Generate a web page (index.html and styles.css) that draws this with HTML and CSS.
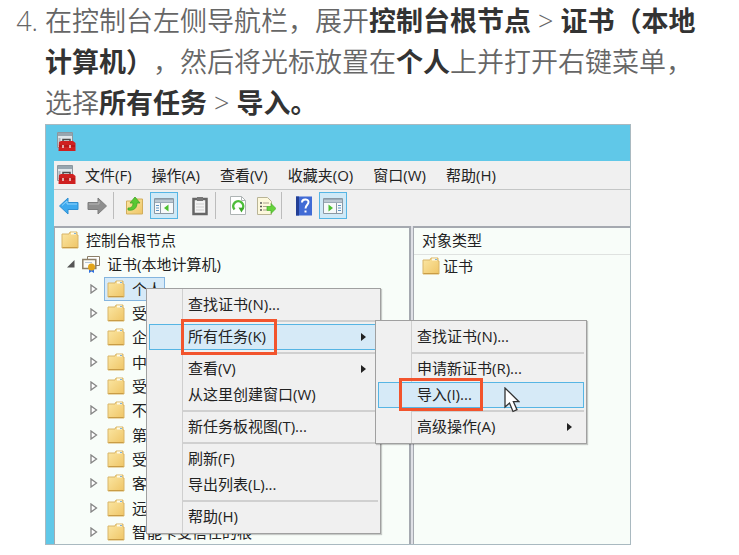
FILE: index.html
```html
<!DOCTYPE html>
<html lang="zh-CN">
<head>
    <meta charset="UTF-8">
    <meta name="viewport" content="width=device-width, initial-scale=1.0">
    <title>导入证书</title>
    <link rel="stylesheet" href="styles.css">
</head>
<body>
<!-- shared icons -->
<svg class="defs" aria-hidden="true">
    <defs>
        <linearGradient id="gold" x1="0" y1="0" x2="1" y2="1">
            <stop offset="0" stop-color="#fbe7a4"/>
            <stop offset="1" stop-color="#efc566"/>
        </linearGradient>
        <symbol id="folder" viewBox="0 0 18 18">
            <path d="M1 3h7l1-2h7v3h1v13H1z" fill="url(#gold)" stroke="#d9b568"/>
            <path d="M10 2.5h5" stroke="#fffbe8" stroke-width="2"/>
            <path d="M13 2.5h2" stroke="#7fb3d8" stroke-width="1"/>
            <path d="M1.5 16.5h15" stroke="#c99c45"/>
        </symbol>
        <symbol id="toolbox" viewBox="0 0 20 20">
            <path d="M1.500 .5h15v15h-15z" fill="#dfe6ea" stroke="#8b979f"/>
            <path d="M2 1h14v3H2z" fill="#97a6b0"/>
            <path d="M3.500 6v8" stroke="#aab5bc" stroke-width="2"/>
            <path d="M7 10V7.500h7V10" fill="none" stroke="#4b4b4b" stroke-width="1.500"/>
            <path d="M3 10l2-1h12l2.500 2v8H2.500z" fill="#cf2020"/>
            <path d="M3 14h16" stroke="#a01010"/>
            <path d="M7 13v3M14 13v3" stroke="#f0d8d8" stroke-width="1.500"/>
        </symbol>
        <symbol id="expander" viewBox="0 0 8 10">
            <path d="M1 1l5.500 4L1 9z" fill="#fff" stroke="#858585" stroke-width="1.300"/>
        </symbol>
    </defs>
</svg>

<ol class="steps" start="4">
    <li>
        <p>在控制台左侧导航栏，展开<b>控制台根节点</b> &gt; <b>证书（本地计算机）</b>，然后将光标放置在<b>个人</b>上并打开右键菜单，选择<b>所有任务</b> &gt; <b>导入。</b></p>

        <div class="window">
            <div class="titlebar"><svg class="app-icon"><use href="#toolbox"/></svg></div>
            <div class="frame">
                <div class="menubar">
                    <svg class="app-icon"><use href="#toolbox"/></svg>
                    <button>文件(F)</button>
                    <button>操作(A)</button>
                    <button>查看(V)</button>
                    <button>收藏夹(O)</button>
                    <button>窗口(W)</button>
                    <button>帮助(H)</button>
                </div>
                <div class="toolbar">
                    <button aria-label="后退"><svg viewBox="0 0 20 20"><path d="M.5 10L9 2v4.500h10v7H9V18z" fill="#3da9ee" stroke="#2f8fd2"/><path d="M3 9.500L8 5v3h10" fill="none" stroke="#8fd3fb"/></svg></button>
                    <button aria-label="前进"><svg viewBox="0 0 20 20"><path d="M19.500 10L11 2v4.500H1v7h10V18z" fill="#8e8e8e" stroke="#7d7d7d"/><path d="M2 8h10V5" fill="none" stroke="#b5b5b5"/></svg></button>
                    <span class="divider"></span>
                    <button aria-label="上一级"><svg viewBox="0 0 20 20"><path d="M1.500 5h7l1-2h8v15h-16z" fill="url(#gold)" stroke="#d2ae5c"/><path d="M3 12c4 0 5-2 5-5H5l5-6 5 6h-3c0 5-3 8-9 7z" fill="#58c832" stroke="#3fa524" stroke-width=".8"/></svg></button>
                    <button class="on" aria-label="显示控制台树"><svg viewBox="0 0 20 20"><path d="M.5 2.500h19v15H.5z" fill="#f7f9fa" stroke="#8b98a3"/><path d="M1 3h18v4H1z" fill="#9cabb8"/><path d="M1 5h18" stroke="#dbe3ea"/><path d="M6.500 7v10" stroke="#8b98a3"/><path d="M2 9.500h3M2 12h3M2 14.500h3" stroke="#5d94c4"/><path d="M14.500 8.500v7L10 12z" fill="#4cc02f"/></svg></button>
                    <button aria-label="粘贴"><svg viewBox="0 0 20 20"><path d="M3.500 3h13v15h-13z" fill="#f4f4f4" stroke="#666" stroke-width="2.500"/><path d="M7 1h6v4H7z" fill="#777"/><path d="M6 8h8M6 11h8M6 14h8" stroke="#cfcfcf"/></svg></button>
                    <span class="divider"></span>
                    <button aria-label="刷新"><svg viewBox="0 0 20 20"><path d="M2.500 .5h11l4 4v14h-15z" fill="#fff" stroke="#aeb4b4"/><path d="M13.500 .5v4h4" fill="none" stroke="#aeb4b4"/><path d="M6.500 13.500a5 5 0 1 1 7.500 0" fill="none" stroke="#4dbd3a" stroke-width="2.500"/><path d="M10.500 11.500l5.500 .5-2.500 4.500z" fill="#3ba829"/></svg></button>
                    <button aria-label="导出列表"><svg viewBox="0 0 20 20"><path d="M1.500 1.500h10l4 4v13h-14z" fill="#fdf8dc" stroke="#b9b496"/><path d="M4 7h2M4 10.500h2M4 14h2" stroke="#555" stroke-width="1.500"/><path d="M7 7h6M7 10.500h4M7 14h4" stroke="#aaa28c"/><path d="M11 10.500h4v-3l5 5-5 5v-3h-4z" fill="#65d33b" stroke="#46ae25" stroke-width=".7"/></svg></button>
                    <span class="divider"></span>
                    <button aria-label="帮助"><svg viewBox="0 0 20 20"><path d="M2 .5h16v19H2z" fill="#416bd5"/><path d="M2 .5h3v19H2z" fill="#233f95"/><path d="M8 6.500c0-4 6.500-4 6.500-.5 0 3-3 3-3 6.500" fill="none" stroke="#fff" stroke-width="2"/><path d="M10.500 14.500h2v2h-2z" fill="#fff"/></svg></button>
                    <button class="on" aria-label="显示操作窗格"><svg viewBox="0 0 20 20"><path d="M.5 2.500h19v15H.5z" fill="#f7f9fa" stroke="#8b98a3"/><path d="M1 3h18v4H1z" fill="#9cabb8"/><path d="M1 5h18" stroke="#dbe3ea"/><path d="M13.500 7v10" stroke="#8b98a3"/><path d="M15 9.500h3M15 12h3M15 14.500h3" stroke="#5d94c4"/><path d="M5.500 8.500v7L10 12z" fill="#4cc02f"/></svg></button>
                </div>
                <div class="panes">
                    <ul class="tree">
                        <li class="root"><svg class="folder"><use href="#folder"/></svg>控制台根节点</li>
                        <li class="store">
                            <svg class="expander" viewBox="0 0 8 10"><path d="M7.500 1v7.500H0z" fill="#555"/></svg>
                            <svg class="folder" viewBox="0 0 18 18"><path d="M5.500 1.500h12v9h-12z" fill="#fff" stroke="#8c7f68"/><path d="M.8 4.500h13v9H.8z" fill="#fbfbf6" stroke="#8c7f68" stroke-width="1.500"/><path d="M3 7.500h7" stroke="#b6c6d8"/><path d="M7 13v5l2.500-1.500L12 18v-5z" fill="#2f6fe0"/><circle cx="9.500" cy="12" r="3.500" fill="#e2a51b"/></svg>
                            证书(本地计算机)
                        </li>
                        <li><svg class="expander"><use href="#expander"/></svg><span class="node selected"><svg class="folder"><use href="#folder"/></svg>个人</span></li>
                        <li><svg class="expander"><use href="#expander"/></svg><span class="node"><svg class="folder"><use href="#folder"/></svg>受</span></li>
                        <li><svg class="expander"><use href="#expander"/></svg><span class="node"><svg class="folder"><use href="#folder"/></svg>企</span></li>
                        <li><svg class="expander"><use href="#expander"/></svg><span class="node"><svg class="folder"><use href="#folder"/></svg>中</span></li>
                        <li><svg class="expander"><use href="#expander"/></svg><span class="node"><svg class="folder"><use href="#folder"/></svg>受</span></li>
                        <li><svg class="expander"><use href="#expander"/></svg><span class="node"><svg class="folder"><use href="#folder"/></svg>不</span></li>
                        <li><svg class="expander"><use href="#expander"/></svg><span class="node"><svg class="folder"><use href="#folder"/></svg>第</span></li>
                        <li><svg class="expander"><use href="#expander"/></svg><span class="node"><svg class="folder"><use href="#folder"/></svg>受</span></li>
                        <li><svg class="expander"><use href="#expander"/></svg><span class="node"><svg class="folder"><use href="#folder"/></svg>客</span></li>
                        <li><svg class="expander"><use href="#expander"/></svg><span class="node"><svg class="folder"><use href="#folder"/></svg>远</span></li>
                        <li><svg class="expander"><use href="#expander"/></svg><span class="node"><svg class="folder"><use href="#folder"/></svg>智能卡受信任的根</span></li>
                    </ul>
                    <div class="list">
                        <div class="list-head">对象类型</div>
                        <div class="list-row"><svg class="folder"><use href="#folder"/></svg>证书</div>
                    </div>
                </div>
            </div>

            <div class="menu context">
                <button>查找证书(N)...</button>
                <hr>
                <div class="parent">
                    <button class="active more"><span class="callout">所有任务(K)</span></button>
                    <div class="menu submenu">
                        <button>查找证书(N)...</button>
                        <hr>
                        <button>申请新证书(R)...</button>
                        <button class="active"><span class="callout">导入(I)...</span>
                            <svg class="cursor" viewBox="0 0 16 26"><path d="M1 1v19l4.500-4 3.500 8.500 4-1.800-3.600-8H15z" fill="#fff" stroke="#333" stroke-width="1.300"/></svg>
                        </button>
                        <hr>
                        <button class="more">高级操作(A)</button>
                    </div>
                </div>
                <hr>
                <button class="more">查看(V)</button>
                <button>从这里创建窗口(W)</button>
                <hr>
                <button>新任务板视图(T)...</button>
                <hr>
                <button>刷新(F)</button>
                <button>导出列表(L)...</button>
                <hr>
                <button>帮助(H)</button>
            </div>
        </div>
    </li>
</ol>
</body>
</html>
```
FILE: styles.css
```css
* {
    box-sizing: border-box;
}
body {
    margin: 0;
    background: #fff;
    color: #666;
    font-family: "Open Sans", "Noto Sans CJK SC", sans-serif;
}
.defs {
    position: absolute;
    width: 0;
    height: 0;
}
.steps {
    margin: 0;
    padding: 0 24px 10px 45px;
    font-size: 27px;
    font-weight: 350;
    line-height: 41px;
    text-spacing-trim: space-all;
}
.steps p {
    margin: 0;
}
.steps b {
    color: #333;
    font-weight: 700;
}

/* console window */
.window {
    position: relative;
    max-width: 586px;
    margin-top: 1px;
    padding-left: 8px;
    border: 1px solid #a9b9c0;
    background: #60c8e8;
    color: #222;
    font-size: 15px;
    font-weight: 400;
    line-height: 20px;
}
.window button {
    padding: 0;
    border: 0;
    background: none;
    color: inherit;
    font: inherit;
    white-space: nowrap;
}
.window svg {
    display: block;
    flex: none;
}
.titlebar {
    height: 36px;
    padding: 7px 0 0 2px;
}
.app-icon {
    width: 20px;
    height: 20px;
}
.frame {
    background: #f0f0f0;
}
.menubar {
    display: flex;
    align-items: center;
    gap: 20px;
    height: 29px;
    padding-left: 2px;
    border-bottom: 1px solid #c4c6c6;
}
.menubar .app-icon {
    margin-right: -11px;
}
.toolbar {
    display: flex;
    align-items: flex-start;
    height: 36px;
    padding: 2px 0 0 1px;
}
.toolbar button {
    display: grid;
    place-items: center;
    width: 28px;
    height: 27px;
}
.toolbar svg {
    width: 20px;
    height: 20px;
}
.toolbar .on {
    margin: 0 8px 0 1px;
    border: 1px solid #56b5e4;
    background: #cfe9f7;
}
.divider {
    width: 1px;
    height: 27px;
    margin: 0 7px 0 2px;
    background: #bcbcbc;
}
.toolbar .divider ~ .divider {
    margin: 0 8px 0 1px;
}
.panes {
    display: grid;
    grid-template-columns: 357px 1fr;
    gap: 2px;
    background: #dfe0e6;
}
.tree {
    display: grid;
    grid-auto-rows: 1fr;
    height: 318px;
    margin: 0;
    padding: 0;
    border: solid #a5a9b0;
    border-width: 2px 2px 0 1px;
    background: #f8fdf9;
    list-style: none;
    overflow: hidden;
}
.tree li {
    display: flex;
    align-items: center;
    padding-left: 35px;
    white-space: nowrap;
}
.tree .root {
    gap: 7px;
    padding-left: 6px;
}
.tree .store {
    gap: 7px;
    padding-left: 12px;
}
.expander {
    width: 8px;
    height: 10px;
}
.folder {
    width: 18px;
    height: 18px;
}
.node {
    display: flex;
    align-items: center;
    gap: 7px;
    height: 24px;
    margin-left: 6px;
    padding: 0 2px;
    border: 1px solid transparent;
}
.node.selected {
    border-color: #84b5df;
    background: #d6eaf8;
}
.list {
    border: solid #a5a9b0;
    border-width: 2px 0 0 1px;
    background: #f8fdf9;
}
.list-head {
    padding: 2px 8px 4px;
    border-bottom: 1px solid #dfe2e0;
}
.list-row {
    display: flex;
    align-items: center;
    gap: 3px;
    height: 22px;
    padding-left: 8px;
}

/* context menus */
.menu {
    position: absolute;
    padding: 3px 2px;
    border: 1px solid #a0a0a0;
    background: linear-gradient(90deg, #f0f0f0 35px, #cfcfcf 35px, #cfcfcf 36px, #f0f0f0 36px);
    box-shadow: 1px 1px 1px rgba(0, 0, 0, 0.2);
}
.context {
    top: 163px;
    left: 100px;
    width: 235px;
}
.submenu {
    top: -4px;
    left: 226px;
    width: 212px;
    z-index: 1;
}
.parent {
    position: relative;
}
.window .menu button {
    display: block;
    position: relative;
    width: 100%;
    height: 26px;
    padding: 1px 0 3px 38px;
    border: 1px solid transparent;
    text-align: left;
    line-height: 20px;
}
.window .menu .active {
    border-color: #56b5e4;
    background: #d6eaf7;
}
.menu hr {
    height: 6px;
    margin: 0 0 0 34px;
    border: 0;
    background: linear-gradient(transparent 2px, #d0d0d0 2px, #d0d0d0 4px, transparent 4px);
}
.more::after {
    content: "";
    position: absolute;
    top: 8px;
    right: 11px;
    border: solid transparent;
    border-width: 4px 0 4px 5px;
    border-left-color: #222;
}
.callout {
    display: inline-block;
    position: relative;
}
.callout::after {
    content: "";
    position: absolute;
    inset: -7px -11px -9px -7px;
    border: 3px solid #f2542d;
}
.submenu .callout::after {
    inset: -6px -11px -7px -18px;
}
.cursor {
    position: absolute;
    top: 4px;
    left: 125px;
    width: 16px;
    height: 26px;
    z-index: 1;
}
```
